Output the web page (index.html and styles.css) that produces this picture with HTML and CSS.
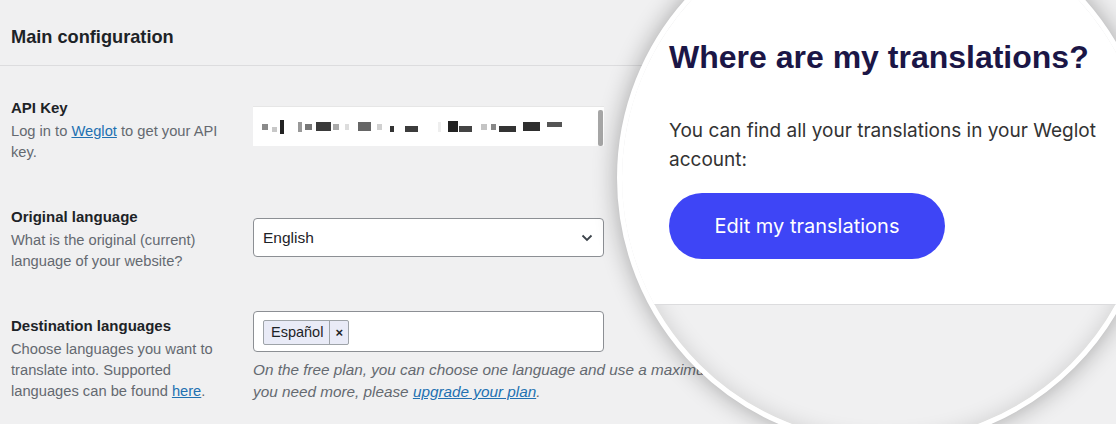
FILE: index.html
```html
<!DOCTYPE html>
<html lang="en">
<head>
  <meta charset="UTF-8" />
  <meta name="viewport" content="width=device-width, initial-scale=1.0" />
  <title>Weglot settings</title>
  <link rel="stylesheet" href="styles.css">
</head>
<body>
  <div class="screen">
    <div class="settings">
      <h2 class="section-title">Main configuration</h2>

      <div class="row row-key">
        <div class="label">
          <strong>API Key</strong>
          <p>Log in to <a href="#">Weglot</a> to get your API<br>key.</p>
        </div>
        <div class="field">
          <div class="key-input">
            <div class="key-mask">
              <span class="b b1"></span><span class="b b2"></span><span class="b b3"></span>
              <span class="b b4"></span><span class="b b5"></span><span class="b b6"></span>
              <span class="b b7"></span><span class="b b8"></span><span class="b b9"></span>
              <span class="b b10"></span><span class="b b11"></span><span class="b b12"></span>
              <span class="b b13"></span><span class="b b14"></span><span class="b b15"></span>
              <span class="b b16"></span><span class="b b17"></span><span class="b b18"></span>
              <span class="b b19"></span><span class="b b20"></span>
            </div>
            <span class="scrollbar"></span>
          </div>
        </div>
      </div>

      <div class="row row-lang">
        <div class="label">
          <strong>Original language</strong>
          <p>What is the original (current)<br>language of your website?</p>
        </div>
        <div class="field">
          <div class="select">
            <span>English</span>
            <svg width="12" height="8" viewBox="0 0 12 8"><path d="M1.5 1.5 L6 6 L10.5 1.5" fill="none" stroke="#3c434a" stroke-width="1.8"/></svg>
          </div>
        </div>
      </div>

      <div class="row row-dest">
        <div class="label">
          <strong>Destination languages</strong>
          <p>Choose languages you want to<br>translate into. Supported<br>languages can be found <a href="#">here</a>.</p>
        </div>
        <div class="field">
          <div class="tags-input">
            <span class="tag"><span class="tag-name">Español</span><span class="tag-remove">×</span></span>
          </div>
          <p class="note">On the free plan, you can choose one language and use a maximum of 2000 words. If<br>you need more, please <a href="#">upgrade your plan</a>.</p>
        </div>
      </div>
    </div>

    <div class="magnifier">
      <div class="zoom-card">
        <h1>Where are my translations?</h1>
        <p>You can find all your translations in your Weglot account:</p>
        <a class="edit-btn" href="#">Edit my translations</a>
      </div>
    </div>
  </div>
</body>
</html>
```

FILE: styles.css
```css
html, body {
  margin: 0;
  overflow: hidden;
}
body {
  background-color: #f0f0f1;
  font-family: "Liberation Sans", Arial, sans-serif;
  color: #1d2327;
}
a {
  color: #2271b1;
}
.screen {
  position: relative;
  height: 424px;
  overflow: hidden;
}
.settings {
  width: 100%;
}
.section-title {
  margin: 0;
  padding: 26px 11px 17px;
  font-size: 18.2px;
  line-height: 22px;
  border-bottom: 1px solid #dcdcde;
}
.row {
  display: flex;
  padding-left: 11px;
  height: 109px;
}
.row-key {
  margin-top: 32px;
}
.label {
  width: 242px;
  flex-shrink: 0;
}
.label strong {
  display: block;
  font-size: 15px;
  line-height: 20px;
}
.label p {
  margin: 3px 0 0;
  width: 230px;
  font-size: 14.7px;
  line-height: 21px;
  color: #646970;
}
.field {
  width: 351px;
}
.key-input {
  margin-top: 8px;
  height: 40px;
  background-color: #fff;
  border-top: 1px solid #e6e6e6;
  box-sizing: border-box;
  display: flex;
  align-items: center;
  justify-content: space-between;
  padding-left: 9px;
}
.key-mask {
  display: flex;
  align-items: center;
  height: 20px;
}
.b {
  display: block;
  height: 6px;
  background-color: #555;
}
.b1 { width: 6px; background-color: #8a8a8a; }
.b2 { width: 5px; margin-left: 4px; background-color: #c8c8c8; height: 5px; margin-top: 6px; }
.b3 { width: 4px; margin-left: 3px; height: 14px; background-color: #222; }
.b4 { width: 4px; margin-left: 14px; background-color: #999; height: 10px; }
.b5 { width: 7px; margin-left: 3px; background-color: #777; }
.b6 { width: 15px; margin-left: 4px; background-color: #3a3a3a; height: 9px; }
.b7 { width: 6px; margin-left: 2px; background-color: #aaa; }
.b8 { width: 4px; margin-left: 6px; background-color: #ddd; }
.b9 { width: 13px; margin-left: 9px; background-color: #666; height: 9px; }
.b10 { width: 5px; margin-left: 6px; background-color: #d0d0d0; }
.b11 { width: 4px; margin-left: 8px; background-color: #333; margin-top: 4px; }
.b12 { width: 13px; margin-left: 11px; background-color: #3c3c3c; margin-top: 4px; }
.b13 { width: 3px; margin-left: 20px; background-color: #eee; height: 10px; }
.b14 { width: 10px; margin-left: 7px; background-color: #222; height: 11px; }
.b15 { width: 13px; margin-left: 1px; background-color: #444; margin-top: 4px; }
.b16 { width: 6px; margin-left: 9px; background-color: #c4c4c4; }
.b17 { width: 5px; margin-left: 4px; background-color: #888; }
.b18 { width: 17px; margin-left: 3px; background-color: #333; margin-top: 4px; }
.b19 { width: 17px; margin-left: 7px; background-color: #2e2e2e; height: 9px; }
.b20 { width: 15px; margin-left: 7px; background-color: #555; height: 5px; margin-top: -4px; }
.scrollbar {
  width: 5px;
  height: 36px;
  margin-right: 1px;
  margin-top: 3px;
  background-color: #a7a7a7;
  border-radius: 2px;
}
.select {
  margin-top: 11px;
  height: 39px;
  box-sizing: border-box;
  background-color: #fff;
  border: 1px solid #8c8f94;
  border-radius: 4px;
  display: flex;
  align-items: center;
  justify-content: space-between;
  padding: 0 10px 0 9px;
  font-size: 15.5px;
}
.tags-input {
  margin-top: -5px;
  height: 41px;
  box-sizing: border-box;
  background-color: #fff;
  border: 1px solid #8c8f94;
  border-radius: 4px;
  padding: 8px 9px;
  display: flex;
  align-items: flex-start;
}
.tag {
  display: flex;
  height: 25px;
  box-sizing: border-box;
  border: 1px solid #9ea3a8;
  border-radius: 2px;
  background-color: #e9ebf7;
  font-size: 14.5px;
  line-height: 23px;
}
.tag-name {
  padding: 0 6px 0 7px;
  border-right: 1px solid #9ea3a8;
}
.tag-remove {
  padding: 0 5px;
  font-size: 13px;
  font-weight: bold;
}
.note {
  margin: 7px 0 0;
  width: 700px;
  font-size: 15.3px;
  line-height: 22px;
  font-style: italic;
  color: #646970;
}
.magnifier {
  position: absolute;
  left: 617px;
  top: -90px;
  width: 536px;
  height: 536px;
  box-sizing: border-box;
  border: 5px solid #fff;
  border-radius: 50%;
  overflow: hidden;
  background-color: #f0f0f1;
  box-shadow: 0 0 24px rgba(0, 0, 0, 0.32), inset 0 0 22px rgba(0, 0, 0, 0.14);
}
.zoom-card {
  background-color: #fff;
  padding: 123px 0 45px 47px;
  border-bottom: 1px solid #dcdcde;
}
.zoom-card h1 {
  margin: 0;
  font-size: 32px;
  line-height: 38px;
  font-weight: bold;
  color: #1b1646;
}
.zoom-card p {
  margin: 40px 0 0;
  width: 440px;
  font-family: Inter, "Noto Sans", sans-serif;
  font-size: 19px;
  line-height: 29px;
  color: #333;
}
.edit-btn {
  display: flex;
  align-items: center;
  justify-content: center;
  margin-top: 19px;
  width: 276px;
  height: 66px;
  border-radius: 33px;
  background-color: #3e45f6;
  color: #fff;
  text-decoration: none;
  font-family: Inter, "Noto Sans", sans-serif;
  font-size: 20px;
}
```
